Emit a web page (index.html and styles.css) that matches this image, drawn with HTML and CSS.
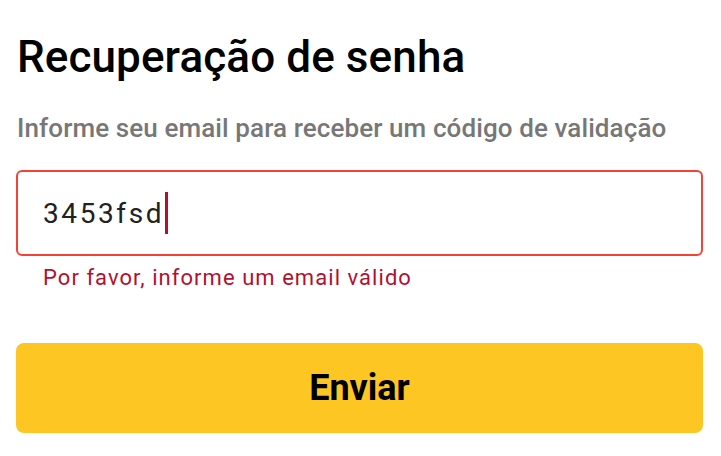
FILE: index.html
```html
<!DOCTYPE html>
<html lang="pt">
<head>
<meta charset="utf-8">
<link rel="stylesheet" href="styles.css">
</head>
<body>
<main class="page">
  <h1 class="title">Recuperação de senha</h1>
  <p class="subtitle">Informe seu email para receber um código de validação</p>
  <div class="field">
    <div class="input"><span class="value">3453fsd</span><span class="cursor"></span></div>
    <div class="error">Por favor, informe um email válido</div>
  </div>
  <button class="send">Enviar</button>
</main>
</body>
</html>
```
FILE: styles.css
```css
html, body {
  margin: 0;
  padding: 0;
  background: #ffffff;
}
body {
  font-family: Roboto, "Noto Sans", sans-serif;
}
.page {
  padding: 31px 18px 0 16px;
  display: flex;
  flex-direction: column;
}
.title {
  margin: 0 0 0 1px;
  font-size: 44px;
  font-weight: 500;
  line-height: 52px;
  letter-spacing: 0.1px;
  color: #000000;
}
.subtitle {
  margin: 29px 0 0 1px;
  font-size: 26px;
  font-weight: 500;
  line-height: 32px;
  letter-spacing: 0.1px;
  color: #777777;
}
.field {
  margin-top: 26px;
  display: flex;
  flex-direction: column;
}
.input {
  box-sizing: border-box;
  height: 86px;
  border: 2px solid #f44336;
  border-radius: 6px;
  display: flex;
  align-items: center;
  padding-left: 25px;
}
.value {
  font-size: 28px;
  letter-spacing: 2.6px;
  color: #222222;
}
.cursor {
  width: 3px;
  height: 42px;
  background: #b3102e;
  margin-left: 1px;
}
.error {
  margin: 8px 0 0 27px;
  font-size: 22px;
  line-height: 28px;
  letter-spacing: 1.05px;
  color: #b3102e;
}
.send {
  margin-top: 51px;
  height: 90px;
  border: none;
  border-radius: 8px;
  background: #fec623;
  font-family: Roboto, "Noto Sans", sans-serif;
  font-size: 36px;
  font-weight: 700;
  color: #000000;
}
```
